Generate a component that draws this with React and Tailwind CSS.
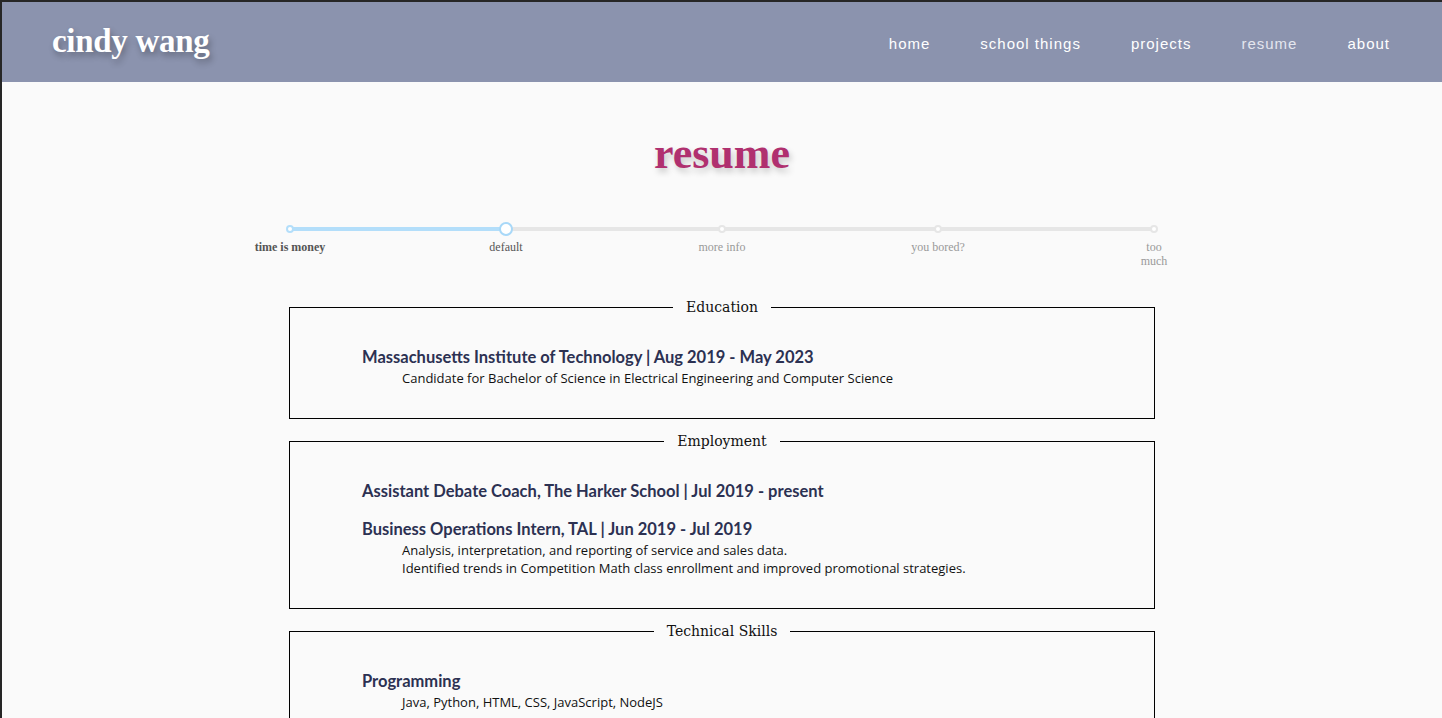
const NAV = ['home', 'school things', 'projects', 'resume', 'about']

const STOPS = [
  { label: 'time is money', cls: 'font-bold text-[#555]' },
  { label: 'default', cls: 'text-[#555]' },
  { label: 'more info', cls: 'text-[#999]' },
  { label: 'you bored?', cls: 'text-[#999]' },
  { label: 'too much', cls: 'text-[#999] max-w-[30px]' },
]

function Section({ title, children }) {
  return (
    <fieldset className="border border-black px-[72px] pt-[29px] pb-[31px] mb-[12px]">
      <legend className="mx-auto px-[13px] text-[14px] text-[#111] font-['DejaVu_Serif',serif]">
        {title}
      </legend>
      <div className="space-y-[18px]">{children}</div>
    </fieldset>
  )
}

function Item({ heading, lines = [] }) {
  return (
    <div>
      <h3 className="text-[16.5px] leading-[20px] font-bold text-[#2c3152] font-['Lato',sans-serif]">
        {heading}
      </h3>
      {lines.length > 0 && (
        <div className="pl-10 text-[13px] leading-[18px] text-[#111] font-['Open_Sans',sans-serif] mt-[2px]">
          {lines.map(l => (
            <p key={l}>{l}</p>
          ))}
        </div>
      )}
    </div>
  )
}

function Slider() {
  return (
    <div className="w-[1080px] mx-auto mt-[42px]">
      <div className="relative mx-[108px] h-[14px]">
        {/* track */}
        <div className="absolute left-0 right-0 top-[5px] h-[4px] rounded bg-[#e6e6e6]" />
        <div className="absolute left-0 w-1/4 top-[5px] h-[4px] rounded bg-[#b3defa]" />
        <span className="absolute left-0 top-[3px] -ml-1 w-2 h-2 rounded-full bg-white border-2 border-[#b3defa]" />
        <span className="absolute left-1/4 top-0 -ml-[7px] w-[14px] h-[14px] rounded-full bg-white border-2 border-[#a8d8f8]" />
        <span className="absolute left-1/2 top-[3px] -ml-1 w-2 h-2 rounded-full bg-white border-2 border-[#e6e6e6]" />
        <span className="absolute left-3/4 top-[3px] -ml-1 w-2 h-2 rounded-full bg-white border-2 border-[#e6e6e6]" />
        <span className="absolute left-full top-[3px] -ml-1 w-2 h-2 rounded-full bg-white border-2 border-[#e6e6e6]" />
      </div>
      <div className="grid grid-cols-5 mt-[4px] font-['Liberation_Serif',serif] text-[12px] leading-[14px]">
        {STOPS.map(s => (
          <div key={s.label} className="flex justify-center">
            <span className={`text-center ${s.cls}`}>{s.label}</span>
          </div>
        ))}
      </div>
    </div>
  )
}

export default function App() {
  return (
    <div className="min-h-screen bg-[#fafafa] border-t-2 border-l-2 border-[#262626]">
      <header className="h-20 bg-[#8b93ae] flex items-center justify-between pl-[50px] pr-[52px]">
        <h1 className="text-white text-[33px] font-bold font-['Liberation_Serif',serif] tracking-[-0.3px] [text-shadow:2px_4px_6px_rgba(0,0,0,0.3)]">
          cindy wang
        </h1>
        <nav className="flex gap-[50px] pt-[4px] font-['Liberation_Sans',sans-serif] text-[15px] tracking-[1px]">
          {NAV.map(n => (
            <a key={n} className={n === 'resume' ? 'text-[#e4e6ee]' : 'text-white'}>
              {n}
            </a>
          ))}
        </nav>
      </header>

      <main className="pt-[46px]">
        <h2 className="text-center text-[44px] leading-[52px] font-bold text-[#b0306f] font-['Liberation_Serif',serif] [text-shadow:2px_4px_6px_rgba(0,0,0,0.2)]">
          resume
        </h2>

        <Slider />

        <div className="w-[866px] mx-auto mt-[29px]">
          <Section title="Education">
            <Item
              heading="Massachusetts Institute of Technology | Aug 2019 - May 2023"
              lines={['Candidate for Bachelor of Science in Electrical Engineering and Computer Science']}
            />
          </Section>

          <Section title="Employment">
            <Item heading="Assistant Debate Coach, The Harker School | Jul 2019 - present" />
            <Item
              heading="Business Operations Intern, TAL | Jun 2019 - Jul 2019"
              lines={[
                'Analysis, interpretation, and reporting of service and sales data.',
                'Identified trends in Competition Math class enrollment and improved promotional strategies.',
              ]}
            />
          </Section>

          <Section title="Technical Skills">
            <Item heading="Programming" lines={['Java, Python, HTML, CSS, JavaScript, NodeJS']} />
            <Item heading="Software" lines={['Git, Eclipse, Adobe Photoshop, Microsoft Office']} />
          </Section>
        </div>
      </main>
    </div>
  )
}
